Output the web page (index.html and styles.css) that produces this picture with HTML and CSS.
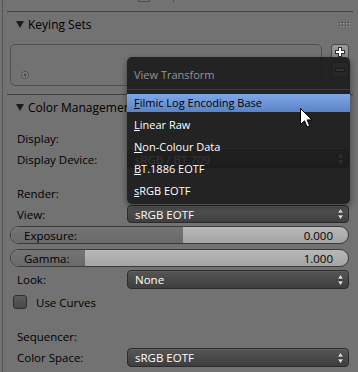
FILE: index.html
```html
<!DOCTYPE html>
<html lang="en">
<head>
    <meta charset="UTF-8">
    <title>Color Management</title>
    <link rel="stylesheet" href="styles.css">
</head>
<body>
    <div class="region">
        <div class="top">
            <span class="stub"></span>
            <span class="tick"></span>
        </div>

        <!-- Keying Sets panel -->
        <section class="panel">
            <div class="head">
                <svg class="tri" width="8" height="7" viewBox="0 0 8 7"><polygon points="0,0 8,0 4,7" /></svg>
                <span>Keying Sets</span>
                <svg class="grip" width="11" height="5" viewBox="0 0 11 5">
                    <g fill="#9a9a9a"><rect x="1" y="1" width="1" height="1"/><rect x="4" y="1" width="1" height="1"/><rect x="7" y="1" width="1" height="1"/><rect x="10" y="1" width="1" height="1"/><rect x="1" y="4" width="1" height="1"/><rect x="4" y="4" width="1" height="1"/><rect x="7" y="4" width="1" height="1"/><rect x="10" y="4" width="1" height="1"/></g>
                    <g fill="#3c3c3c"><rect x="0" y="0" width="1" height="1"/><rect x="3" y="0" width="1" height="1"/><rect x="6" y="0" width="1" height="1"/><rect x="9" y="0" width="1" height="1"/><rect x="0" y="3" width="1" height="1"/><rect x="3" y="3" width="1" height="1"/><rect x="6" y="3" width="1" height="1"/><rect x="9" y="3" width="1" height="1"/></g>
                </svg>
            </div>
            <div class="keying">
                <div class="list">
                    <svg class="add-small" width="8" height="8" viewBox="0 0 8 8">
                        <circle cx="4" cy="4" r="3.5" fill="#8c8c8c" stroke="#4a4a4a" stroke-width="1"/>
                        <path d="M4 2v4M2 4h4" stroke="#3a3a3a" stroke-width="1"/>
                    </svg>
                </div>
                <div class="side">
                    <div class="sbtn">
                        <svg width="12" height="12" viewBox="0 0 12 12"><path d="M6 1v10M1 6h10" stroke="#2e2e2e" stroke-width="4"/><path d="M6 2v8M2 6h8" stroke="#fff" stroke-width="2"/></svg>
                    </div>
                    <div class="sbtn">
                        <svg width="12" height="12" viewBox="0 0 12 12"><path d="M1 6h10" stroke="#2e2e2e" stroke-width="4"/><path d="M2 6h8" stroke="#fff" stroke-width="2"/></svg>
                    </div>
                </div>
            </div>
        </section>

        <!-- Color Management panel -->
        <section class="panel">
            <div class="head head-cm">
                <svg class="tri" width="8" height="7" viewBox="0 0 8 7"><polygon points="0,0 8,0 4,7" /></svg>
                <span>Color Management</span>
            </div>
            <div class="rows">
                <div class="row">Display:</div>
                <div class="row">
                    <span class="lbl">Display Device:</span>
                    <div class="menu">sRGB / BT.709<svg class="updown" width="7" height="12" viewBox="0 0 7 12"><polygon points="0.5,5 3.5,0.5 6.5,5"/><polygon points="0.5,7 3.5,11.5 6.5,7"/></svg></div>
                </div>
                <div class="row spaced">Render:</div>
                <div class="row">
                    <span class="lbl">View:</span>
                    <div class="menu">sRGB EOTF<svg class="updown" width="7" height="12" viewBox="0 0 7 12"><polygon points="0.5,5 3.5,0.5 6.5,5"/><polygon points="0.5,7 3.5,11.5 6.5,7"/></svg></div>
                </div>
                <div class="slider">
                    <div class="fill" style="width: 51%"></div>
                    <span class="s-lbl">Exposure:</span>
                    <span class="s-val">0.000</span>
                </div>
                <div class="slider slider-gamma">
                    <div class="fill" style="width: 22%"></div>
                    <span class="s-lbl">Gamma:</span>
                    <span class="s-val">1.000</span>
                </div>
                <div class="row row-look">
                    <span class="lbl">Look:</span>
                    <div class="menu">None<svg class="updown" width="7" height="12" viewBox="0 0 7 12"><polygon points="0.5,5 3.5,0.5 6.5,5"/><polygon points="0.5,7 3.5,11.5 6.5,7"/></svg></div>
                </div>
                <div class="row row-check">
                    <span class="check"></span>
                    <span>Use Curves</span>
                </div>
                <div class="row spaced">Sequencer:</div>
                <div class="row row-look">
                    <span class="lbl">Color Space:</span>
                    <div class="menu">sRGB EOTF<svg class="updown" width="7" height="12" viewBox="0 0 7 12"><polygon points="0.5,5 3.5,0.5 6.5,5"/><polygon points="0.5,7 3.5,11.5 6.5,7"/></svg></div>
                </div>
            </div>
        </section>
    </div>

    <!-- open enum menu -->
    <div class="popup">
        <div class="p-title">View Transform</div>
        <div class="p-sep"></div>
        <div class="p-item active"><u>F</u>ilmic Log Encoding Base</div>
        <div class="p-item"><u>L</u>inear Raw</div>
        <div class="p-item"><u>N</u>on-Colour Data</div>
        <div class="p-item"><u>B</u>T.1886 EOTF</div>
        <div class="p-item"><u>s</u>RGB EOTF</div>
    </div>

    <svg class="cursor" width="13" height="21" viewBox="0 0 13 21">
        <path d="M0.5 0.5 L0.5 16.5 L4.5 12.8 L7 18.8 L9.6 17.7 L7.2 11.9 L12 11.9 Z" fill="#fff" stroke="#000" stroke-width="1"/>
    </svg>
</body>
</html>
```

FILE: styles.css
```css
html, body {
    margin: 0;
    padding: 0;
}
body {
    width: 358px;
    height: 372px;
    overflow: hidden;
    background: #737373;
    font-family: "Open Sans", "DejaVu Sans", sans-serif;
    font-size: 11.5px;
    color: #000;
    position: relative;
}
.region {
    margin-left: 2px;
    border-left: 1px solid #555;
    height: 372px;
    background: #727272;
}
.top {
    height: 11px;
    position: relative;
}
.stub {
    display: block;
    width: 10px;
    height: 1px;
    margin-left: 135px;
    border: 1px solid #505050;
    border-top: none;
}
.tick {
    display: block;
    width: 1px;
    height: 2px;
    margin: -2px 0 0 170px;
    background: #505050;
}
.panel {
    margin: 0 5px 0 4px;
    border-top: 1px solid #434343;
}
.head {
    height: 24px;
    display: flex;
    align-items: center;
    padding-left: 9px;
    font-size: 12px;
}
.tri {
    fill: #1c1c1c;
    margin-right: 4px;
}
.grip {
    margin-left: auto;
    margin-right: 3px;
}
.keying {
    display: flex;
    padding: 8px 0 8px 3px;
}
.list {
    width: 312px;
    height: 42px;
    box-sizing: border-box;
    border: 1px solid #505050;
    border-radius: 5px;
    position: relative;
}
.add-small {
    position: absolute;
    left: 10px;
    bottom: 6px;
}
.side {
    display: flex;
    flex-direction: column;
    gap: 2px;
    margin-left: 9px;
}
.sbtn {
    width: 18px;
    height: 16px;
    box-sizing: border-box;
    border: 1px solid #4a4a4a;
    border-radius: 3px;
    background: linear-gradient(#9a9a9a, #848484);
    display: flex;
    align-items: center;
    justify-content: center;
}
.head-cm {
    height: 24px;
}
.rows {
    display: flex;
    flex-direction: column;
    gap: 3px;
    padding: 10px 4px 0 10px;
}
.row {
    height: 18px;
    display: flex;
    align-items: center;
}
.row.spaced {
    margin-top: 13px;
}
.row-look {
    height: 19px;
}
.lbl {
    width: 110px;
    flex: none;
}
.menu {
    flex: 1;
    height: 100%;
    box-sizing: border-box;
    border: 1px solid #2c2c2c;
    border-radius: 4px;
    background: linear-gradient(#565656, #3e3e3e);
    box-shadow: inset 0 1px #606060;
    color: #fff;
    padding-left: 7px;
    display: flex;
    align-items: center;
}
.updown {
    margin-left: auto;
    margin-right: 4px;
    fill: #e0e0e0;
    stroke: #303030;
    stroke-width: 0.6;
}
.slider {
    margin-left: -7px;
    height: 18px;
    box-sizing: border-box;
    border: 1px solid #3a3a3a;
    border-radius: 9px;
    background: linear-gradient(#b8b8b8, #a4a4a4);
    display: flex;
    align-items: center;
    position: relative;
    overflow: hidden;
}
.slider-gamma {
    margin-top: 2px;
}
.fill {
    position: absolute;
    left: 0;
    top: 0;
    bottom: 0;
    background: linear-gradient(#747474, #6a6a6a);
}
.s-lbl {
    position: relative;
    margin-left: 13px;
}
.s-val {
    position: relative;
    margin-left: auto;
    margin-right: 15px;
}
.row-check {
    margin-top: 1px;
}
.check {
    width: 14px;
    height: 14px;
    box-sizing: border-box;
    margin: 0 9px 0 -4px;
    border: 1px solid #2e2e2e;
    border-radius: 3px;
    background: linear-gradient(#5c5c5c, #474747);
}
.popup {
    position: absolute;
    left: 127px;
    top: 57px;
    width: 223px;
    padding-bottom: 2px;
    border-radius: 5px;
    background: rgba(24, 24, 24, 0.88);
    box-shadow: 0 3px 6px rgba(0, 0, 0, 0.45);
    font-size: 11px;
}
.p-title {
    height: 28px;
    margin-top: 4px;
    padding-left: 7px;
    line-height: 28px;
    color: #959595;
}
.p-sep {
    height: 1px;
    background: #3e3e3e;
}
.p-item {
    height: 22px;
    line-height: 22px;
    padding-left: 7px;
    color: #fff;
}
.p-item.active {
    height: 18px;
    line-height: 18px;
    margin: 4px 0 2px;
    color: #000;
    background: linear-gradient(#80a6e6, #5a84c8);
}
.cursor {
    position: absolute;
    left: 300px;
    top: 108px;
}
```
